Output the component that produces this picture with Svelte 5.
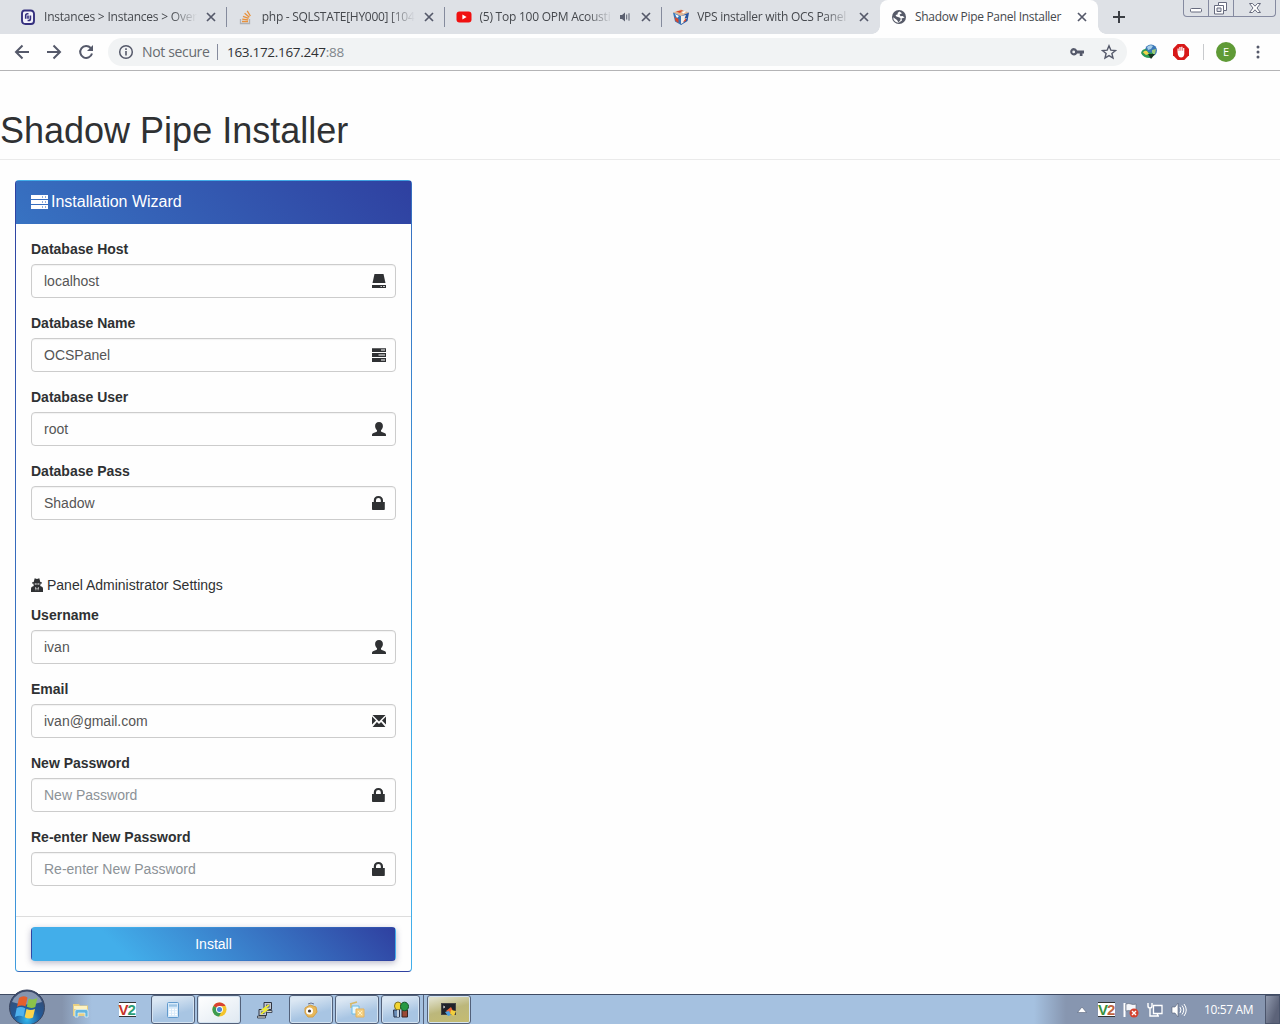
<script lang="ts">
  type Tab = { icon: string; title: string; audio?: boolean; active?: boolean; spacing: number };
  type Field = { label: string; value?: string; placeholder?: string; icon: string };

  const tabs: Tab[] = [
    { icon: "scaleway", title: "Instances > Instances > Over", spacing: -0.22 },
    { icon: "stack", title: "php - SQLSTATE[HY000] [104", spacing: -0.28 },
    { icon: "youtube", title: "(5) Top 100 OPM Acousti", audio: true, spacing: -0.24 },
    { icon: "cube", title: "VPS installer with OCS Panel", spacing: -0.28 },
    { icon: "globe", title: "Shadow Pipe Panel Installer", active: true, spacing: -0.3 },
  ];

  const database: Field[] = [
    { label: "Database Host", value: "localhost", icon: "hdd" },
    { label: "Database Name", value: "OCSPanel", icon: "tasks" },
    { label: "Database User", value: "root", icon: "user" },
    { label: "Database Pass", value: "Shadow", icon: "lock" },
  ];

  const admin: Field[] = [
    { label: "Username", value: "ivan", icon: "user" },
    { label: "Email", value: "ivan@gmail.com", icon: "envelope" },
    { label: "New Password", placeholder: "New Password", icon: "lock" },
    { label: "Re-enter New Password", placeholder: "Re-enter New Password", icon: "lock" },
  ];
</script>

{#snippet favicon(name: string)}
  <svg class="favicon" viewBox="0 0 16 16" width="16" height="16">
    {#if name === "scaleway"}
      <path d="M4.500 1.500h6q3.500 0 3.500 3.500v7q0 3-3 3H5.500Q2 15 2 11.500V4.500q0-3 2.500-3z" fill="#f2f1fa" stroke="#35307f" stroke-width="1.900" />
      <path d="M8.500 4.800H7.500Q5.700 4.800 5.700 6.500v3.200M7.600 11.500h1q1.800 0 1.800-1.800V6.500M8 6.500v3.200" fill="none" stroke="#35307f" stroke-width="1.600" />
    {:else if name === "stack"}
      <path d="M2.500 10v4.500h9V10" fill="none" stroke="#aeb0b4" stroke-width="1.300" />
      <path d="M4 12.500h6M4.200 10.100l6 .8M5 7.300l5.600 2M6.600 4.300l4.800 4M9.200 1.800l3.200 5.200" stroke="#e8913c" stroke-width="1.300" />
    {:else if name === "youtube"}
      <rect x="0.500" y="2.500" width="15" height="11" rx="3" fill="#f01010" />
      <path d="M6.400 5.500v5l4.200-2.500z" fill="#fff" />
    {:else if name === "cube"}
      <path d="M0 3.500L8 .500l8 3L8 7z" fill="#dfb795" />
      <path d="M0 3.500L8 7v9L2 12.500z" fill="#3574b8" />
      <path d="M16 3.500L8 7v9l6.500-4z" fill="#2855a0" />
      <path d="M3 2.500l4 1.400 3-2.900zM1.500 8l4 2v4L2.500 12z" fill="#d8472c" />
      <path d="M8 7l5-1-1.500 3.500L14 9l-4 5-2 1z" fill="#f4eee6" />
      <path d="M2 5l4 2-2 2zM9 3l3-1 1 1-3 1.500z" fill="#fff" />
      <path d="M10 13l3-4v3z" fill="#d8472c" />
    {:else}
      <circle cx="8" cy="8" r="7" fill="#565a68" />
      <path d="M8.500 2.400Q6 3.500 6.500 5.500L4.500 6Q5 8 7 8l2.500 1v2L7.500 13.500 6 11 2.200 8.200Q2 11 4.500 12.800 7 14.200 8 13.600L11 11.500 10.500 9.500 13.700 8.500 11.500 7 9.500 7.200 8.500 5.500 11 4.300z" fill="#fff" />
    {/if}
  </svg>
{/snippet}

{#snippet glyph(name: string)}
  <svg class="glyph" viewBox="0 0 14 14" width="14" height="14" fill="#2f3133">
    {#if name === "hdd"}
      <path d="M2.500 0h9L13.500 9H.500z" />
      <path fill-rule="evenodd" d="M0 11h14v3H0zM8.500 12v.800h1.500V12zM11 12v.800h2V12z" />
    {:else if name === "tasks"}
      <path fill-rule="evenodd" d="M0 .200h14v3.900H0zM9 1.600v1h4v-1zM0 5.100h14v3.900H0zM6.500 6.500v1H13v-1zM0 10h14v3.900H0zM9 11.400v1h4v-1z" />
    {:else if name === "user"}
      <path d="M7 0C4.400 0 3 1.700 3.100 4.200c.1 1.700.9 3.200 1.900 4.100v1.200C4.200 10.200 1.500 10.700.600 11.600 0 12.200 0 13 0 14h14c0-1 0-1.800-.6-2.400-.9-.9-3.600-1.400-4.400-2.100V8.300c1-.9 1.800-2.400 1.900-4.100C11 1.700 9.600 0 7 0z" />
    {:else if name === "lock"}
      <path fill-rule="evenodd" d="M0 6h1.800V4.200C1.800 1.700 3.600 0 6.400 0S11 1.700 11 4.200V6h1.800v7.200q0 .8-.8.800H.800q-.8 0-.8-.8zM4 6h4.800V4.200Q8.800 2 6.400 2T4 4.200z" />
    {:else}
      <path d="M.500 1h13L7 7.400zM0 2.500l4 4L0 10.600zM14 2.500v8.100L10 6.500zM.600 13l4.300-5L7 10l2.100-2L13.400 13z" />
    {/if}
  </svg>
{/snippet}

{#snippet cross()}
  <svg class="cross" viewBox="0 0 16 16" width="16" height="16"><path d="M4 4l8 8M12 4l-8 8" stroke="#55596a" stroke-width="1.700" /></svg>
{/snippet}

{#snippet formGroup(f: Field)}
  <div class="form-group">
    <span class="label">{f.label}</span>
    <div class="control">
      {#if f.value}<span class="value">{f.value}</span>{:else}<span class="placeholder">{f.placeholder}</span>{/if}
      {@render glyph(f.icon)}
    </div>
  </div>
{/snippet}

<div class="screen">
  <header class="tab-strip">
    {#each tabs as t (t.title)}
      <div class="tab" class:active={t.active}>
        {@render favicon(t.icon)}
        <span class="title" class:fade={!t.active} style="letter-spacing:{t.spacing}px">{t.title}</span>
        {#if t.audio}
          <svg class="audio" viewBox="0 0 12 12" width="12" height="12">
            <path d="M1 4h2l3-2.500v9L3 8H1z" fill="#5b6070" />
            <path d="M7.700 3.500v5M10 2.300v7.400" stroke="#5b6070" />
          </svg>
        {/if}
        {@render cross()}
      </div>
    {/each}
    <svg class="new-tab" viewBox="0 0 14 14" width="14" height="14"><path d="M7 1v12M1 7h12" stroke="#3b3e44" stroke-width="2" /></svg>
    <div class="window-buttons">
      <svg viewBox="0 0 24 16" width="24" height="16"><rect x="6.500" y="8.500" width="11" height="3.500" rx="1" fill="#fff" stroke="#676b7e" /></svg>
      <svg viewBox="0 0 24 16" width="24" height="16">
        <path fill-rule="evenodd" d="M9.500 2.500h8v8h-3v3.500h-9V5.500h4zM8 8v3.500h4V8z" fill="#fff" stroke="#676b7e" />
        <path d="M9.500 5.500h5v5" fill="none" stroke="#676b7e" />
      </svg>
      <svg viewBox="0 0 41 16" width="41" height="16"><path d="M15.500 3.500h3l2.500 2.700 2.500-2.700h3L23 8l3.500 4.500h-3L21 9.800l-2.500 2.700h-3L19 8z" fill="#fff" stroke="#676b7e" /></svg>
    </div>
  </header>

  <div class="toolbar">
    <svg viewBox="0 0 16 16" width="16" height="16"><path d="M15 8H2M8.500 1.500L2 8l6.500 6.500" fill="none" stroke="#55596a" stroke-width="2" /></svg>
    <svg viewBox="0 0 16 16" width="16" height="16"><path d="M1 8h13M7.500 1.500L14 8l-6.500 6.500" fill="none" stroke="#55596a" stroke-width="2" /></svg>
    <svg viewBox="0 0 16 16" width="16" height="16">
      <path d="M12.700 4A6 6 0 1 0 14 9.500" fill="none" stroke="#55596a" stroke-width="2" />
      <path d="M15 1v6H9z" fill="#55596a" />
    </svg>
    <div class="omnibox">
      <svg viewBox="0 0 16 16" width="16" height="16">
        <circle cx="8" cy="8" r="6.300" fill="none" stroke="#55596a" stroke-width="1.500" />
        <path d="M8 7v4.500M8 4.300v1.600" stroke="#55596a" stroke-width="1.600" />
      </svg>
      <span class="not-secure">Not secure</span>
      <span class="bar"></span>
      <span class="url">163.172.167.247<i>:88</i></span>
      <svg class="key" viewBox="0 0 16 16" width="16" height="16">
        <path fill-rule="evenodd" d="M4.700 4a3.700 3.700 0 0 1 3.500 2.500H15v3h-1.500V12h-2.700V9.500H8.200A3.700 3.700 0 1 1 4.700 4zM4.700 6.500a1.400 1.400 0 1 0 0 2.800 1.400 1.400 0 1 0 0-2.800z" fill="#55596a" />
      </svg>
      <svg class="star" viewBox="0 0 16 16" width="16" height="16"><path d="M8 1.800l1.800 4.300 4.700.4-3.600 3 1.100 4.600L8 11.600l-4 2.500 1.100-4.600-3.600-3 4.700-.4z" fill="none" stroke="#55596a" stroke-width="1.400" /></svg>
    </div>
    <svg class="idm" viewBox="0 0 18 16" width="18" height="16">
      <circle cx="11" cy="6.500" r="6" fill="#3b78b8" />
      <path d="M7 3q3-3 6-1l-2 3-3 1z" fill="#a8cfe8" />
      <path d="M12 6l4-1-1 5-3 1z" fill="#9ccc78" />
      <path d="M1 9q1-4 5-4l2 3 5 1v2l-3 3Q3 14 1 9z" fill="#2d9a56" />
      <path d="M3 8.500q1-2.500 4-1.500l2 3-3 1z" fill="#f2d34a" />
      <path d="M8 10h7l-4 5z" fill="#17351f" />
    </svg>
    <svg class="blocker" viewBox="0 0 16 16" width="16" height="16">
      <path d="M4.700 0h6.600L16 4.700v6.600L11.300 16H4.700L0 11.300V4.700z" fill="#d81818" />
      <path d="M4.500 8V4.500h1.200V7h.600V3h1.300v3.700h.600V2.700h1.300v4h.6V4h1.200v6Q10.800 13.500 8 13.500 6 13.500 5 11z" fill="#fff" />
    </svg>
    <span class="split"></span>
    <span class="avatar">E</span>
    <svg class="menu" viewBox="0 0 4 14" width="4" height="14" fill="#55596a"><circle cx="2" cy="2" r="1.500" /><circle cx="2" cy="7" r="1.500" /><circle cx="2" cy="12" r="1.500" /></svg>
  </div>

  <main>
    <h1>Shadow Pipe Installer</h1>
    <section class="panel">
      <div class="panel-heading">
        <svg viewBox="0 0 17 14" width="17" height="14">
          <path d="M0 0h17v4H0zM0 5h17v4H0zM0 10h17v4H0z" fill="#fff" />
          <path d="M11 2h1M14 2h1M11 7h1M14 7h1M11 12h1M14 12h1" stroke="#6f94cf" stroke-width="1.300" />
        </svg>
        <span>Installation Wizard</span>
      </div>
      <div class="panel-body">
        {#each database as f (f.label)}{@render formGroup(f)}{/each}
        <div class="legend">
          <svg viewBox="0 0 12 14" width="12" height="14">
            <path d="M2.700 4L3.700.300l2.300.7L8.300.300 9.300 4l1.700.5v1H9.700L9.200 8l1.800.8q1 .7 1 2V14H0v-3.200q0-1.300 1-2L2.800 8l-.5-2.500H1v-1z" fill="#2f3133" />
            <path d="M3.700 5.600h2v1h-2zM6.400 5.600h2v1h-2zM4 9l1.500 1-.500 3zM8 9L6.500 10l.5 3z" fill="#fff" />
          </svg>
          <span>Panel Administrator Settings</span>
        </div>
        {#each admin as f (f.label)}{@render formGroup(f)}{/each}
      </div>
      <div class="panel-footer"><button>Install</button></div>
    </section>
  </main>

  <footer class="taskbar">
    <svg class="orb" viewBox="0 0 38 36" width="38" height="36">
      <defs>
        <radialGradient id="orb" cx="50%" cy="85%" r="80%">
          <stop offset="0" stop-color="#32b7ed" />
          <stop offset="0.450" stop-color="#205b9c" />
          <stop offset="1" stop-color="#3b4a6b" />
        </radialGradient>
      </defs>
      <circle cx="19" cy="18.500" r="17.500" fill="url(#orb)" stroke="#3a455f" />
      <path d="M4 13Q8 3 19 2.500 30 3 34 13 19 18 4 13z" fill="#c6d1e2" opacity="0.550" />
      <path d="M11 9q4-3 8.500-.5l-2 9q-4-2-8.500.2z" fill="#e5602d" />
      <path d="M20.800 9.500q4 2 8.500-.5l-2 9q-4 2-8.500-.2z" fill="#8bc34a" />
      <path d="M8.700 19q4-2 8.500.2l-1.800 8.500q-4-2-8.500.2z" fill="#4fb2ee" />
      <path d="M18.500 20q4 2 8.500 0l-2 8.500q-4 2-8.300-.3z" fill="#fbd34c" />
    </svg>
    <div class="launch explorer">
      <svg viewBox="0 0 18 16" width="18" height="16">
        <path d="M1 2h6l1 1.500h8V14H1z" fill="#e8cf82" />
        <path d="M2 4h13v3H2z" fill="#fff3c0" />
        <path d="M3 15V9q0-1.500 2-1.500h9q2 0 2 1.500v6h-3v-4H6v4z" fill="#65b5de" stroke="#e6f6ff" stroke-width="0.700" />
      </svg>
    </div>
    <div class="launch">
      <span class="v2"><b>V</b><em>2</em></span>
    </div>
    <div class="task">
      <svg viewBox="0 0 16 18" width="16" height="18">
        <rect x="2.500" y="1.500" width="11" height="15" rx="1" fill="#d7eafa" stroke="#629bce" />
        <path d="M4 4h8M4 5h8" stroke="#8bb9df" /><path d="M4 8.500h8M4 11h8M4 13.500h8" stroke="#fff" stroke-width="1.500" stroke-dasharray="2 1" />
      </svg>
    </div>
    <div class="task lit">
      <svg viewBox="0 0 16 16" width="15" height="15">
        <circle cx="8" cy="8" r="7.500" fill="#f4c42c" />
        <path d="M8 8L1.500 4.200A7.500 7.500 0 0 1 14.500 4.300H8z" fill="#d94133" />
        <path d="M8 8L1.500 4.200A7.500 7.500 0 0 0 7.500 15.500L10.500 9.500z" fill="#3c9b50" />
        <circle cx="8" cy="8" r="3.700" fill="#fff" /><circle cx="8" cy="8" r="2.700" fill="#4b86d8" />
      </svg>
    </div>
    <div class="launch putty">
      <svg viewBox="0 0 18 18" width="18" height="18">
        <path d="M8 1.500h7.500v7H8zM3 8.500h7.500v6H3z" fill="#c3c7d0" stroke="#2f3542" />
        <path d="M10 3.500h3.500v3H10zM5 10.500h3.500v2.500H5z" fill="#414d74" />
        <path d="M1.500 15h8v2h-8zM10 9.500h6v2h-6z" fill="#d7d7d2" stroke="#2f3542" stroke-width="0.800" />
        <path d="M13 4L7 8.500h4L5 13" fill="none" stroke="#f1ed31" stroke-width="1.700" />
      </svg>
    </div>
    <div class="task">
      <svg viewBox="0 0 16 16" width="16" height="16">
        <path d="M2 6l5-3 6 2 1 5-4 5H5L2 11z" fill="#e8b859" stroke="#d3a04a" />
        <circle cx="6.500" cy="9" r="3.500" fill="#fff" /><circle cx="6.500" cy="9" r="1.600" fill="#423832" />
        <path d="M5 2q3-2 6 0" stroke="#697391" fill="none" />
      </svg>
    </div>
    <div class="task">
      <svg viewBox="0 0 18 18" width="18" height="18">
        <path d="M2 3l7-2M3 3v4" stroke="#d6b866" stroke-width="1.500" />
        <path d="M4 5h7v8H4z" fill="#e4f7ff" stroke="#69bde8" /><path d="M8 8h8v8H8z" fill="#f4d184" stroke="#e6b35c" />
        <path d="M10 10l4 4M14 10l-4 4" stroke="#fff0c6" />
      </svg>
    </div>
    <div class="task stacked">
      <svg viewBox="0 0 18 18" width="18" height="18">
        <path d="M1.500 9h6v7h-5.500z" fill="#6a8db7" stroke="#273047" /><path d="M10 9h5.500v7h-5.500z" fill="#9b4936" stroke="#3d2420" />
        <ellipse cx="6" cy="5" rx="3.500" ry="4" fill="#f2d532" stroke="#81701c" /><ellipse cx="12.500" cy="5.500" rx="4" ry="4.300" fill="#269943" stroke="#14542a" />
        <path d="M6 9v7" stroke="#e2eaf1" stroke-width="1.500" />
      </svg>
    </div>
    <div class="task alert">
      <svg viewBox="0 0 16 16" width="16" height="16">
        <rect x="0.500" y="1.500" width="14" height="11" fill="#20232a" stroke="#444" />
        <path d="M2 4l2 1-2 1" fill="none" stroke="#fff" stroke-width="0.700" />
        <path d="M5 9l5-4 2 4-4 3z" fill="#ef6638" /><path d="M4 10l4-1 2 4-3 1z" fill="#4f9fe0" /><path d="M10 8l5 1-2 5-4-2z" fill="#f2cf3d" />
      </svg>
    </div>
    <div class="tray">
      <svg viewBox="0 0 10 6" width="10" height="6"><path d="M5 0L9.500 5.500H.500z" fill="#fff" stroke="#59647c" stroke-width="0.600" /></svg>
      <span class="v2 green"><b>V</b><em>2</em></span>
      <svg viewBox="0 0 16 16" width="16" height="16">
        <path d="M1.500 1v14" stroke="#fff" stroke-width="2" /><path d="M3 2q3-1 5 0t5 0v7q-3 1-5 0T3 9z" fill="#f4f6fa" stroke="#596172" stroke-width="0.600" />
        <circle cx="11" cy="11" r="4.500" fill="#d4422f" /><path d="M9 9l4 4M13 9l-4 4" stroke="#fff" stroke-width="1.400" />
      </svg>
      <svg viewBox="0 0 16 16" width="16" height="16">
        <path d="M6.500 3.500h8.500v8h-8.500z" fill="#7584a1" stroke="#fff" stroke-width="1.300" />
        <path d="M1 1v3q0 2 2 2t2-2V1M3 6v8h9M10.500 12v2" fill="none" stroke="#fff" stroke-width="1.400" />
      </svg>
      <svg viewBox="0 0 16 16" width="16" height="16">
        <path d="M1 5h3l3-4v14l-3-4H1z" fill="#fff" stroke="#566077" stroke-width="0.600" /><path d="M9 5q2 3 0 6M11 3.500q3.500 4.500 0 9M13 2q4.500 6 0 12" fill="none" stroke="#fff" />
      </svg>
      <span class="clock">10:57 AM</span>
    </div>
    <div class="show-desktop"></div>
  </footer>
</div>

<style>
  :global(body) {
    margin: 0;
    background: #fff;
  }
  .screen {
    display: flex;
    flex-direction: column;
    width: 1280px;
    height: 1024px;
    overflow: hidden;
    box-sizing: border-box;
    background: #fefefe;
    font-family: "Liberation Sans", Arial, sans-serif;
    font-size: 14px;
    line-height: 20px;
    color: #2f3133;
  }
  svg {
    display: block;
    flex: none;
  }

  .tab-strip {
    position: relative;
    display: flex;
    align-items: center;
    height: 34px;
    flex: none;
    padding-left: 9px;
    background: #dee1e6;
    font-family: "Open Sans", sans-serif;
    font-size: 12px;
  }
  .tab {
    display: flex;
    align-items: center;
    width: 217.750px;
    height: 34px;
    padding: 0 8px 0 11px;
    box-sizing: border-box;
    position: relative;
    color: #45484d;
  }
  .tab:not(.active)::after {
    content: "";
    position: absolute;
    right: 0;
    top: 7px;
    width: 1px;
    height: 20px;
    background: #858b9d;
  }
  .tab:nth-child(4)::after {
    display: none;
  }
  .tab.active {
    background: #fefefe;
    border-radius: 8px 8px 0 0;
  }
  .tab.active::before,
  .tab.active::after {
    content: "";
    position: absolute;
    bottom: 0;
    width: 8px;
    height: 8px;
  }
  .tab.active::before {
    left: -8px;
    background: radial-gradient(circle at 0 0, transparent 7.500px, #fefefe 8px);
  }
  .tab.active::after {
    right: -8px;
    background: radial-gradient(circle at 100% 0, transparent 7.500px, #fefefe 8px);
  }
  .title {
    flex: 1;
    min-width: 0;
    margin: 0 4px 0 8px;
    white-space: nowrap;
  }
  .fade {
    mask-image: linear-gradient(to right, #000 calc(100% - 28px), transparent calc(100% - 2px));
  }
  .audio {
    margin-right: 7px;
  }
  .new-tab {
    margin-left: 14px;
  }
  .window-buttons {
    position: absolute;
    right: 4px;
    top: 0;
    display: flex;
    border: 1px solid #858aa0;
    border-top: 0;
    border-radius: 0 0 4px 4px;
  }
  .window-buttons svg + svg {
    border-left: 1px solid #858aa0;
  }

  .toolbar {
    display: flex;
    align-items: center;
    height: 37px;
    flex: none;
    box-sizing: border-box;
    padding-left: 14px;
    gap: 16px;
    background: #fefefe;
    border-bottom: 1px solid #b4b4b6;
    font-family: "Open Sans", sans-serif;
  }
  .omnibox {
    display: flex;
    align-items: center;
    width: 1019px;
    height: 28px;
    margin-left: -2px;
    padding: 0 10px;
    box-sizing: border-box;
    border-radius: 14px;
    background: #f1f3f4;
    color: #676b70;
  }
  .not-secure {
    width: 67px;
    margin-left: 8px;
    white-space: nowrap;
    letter-spacing: -0.350px;
  }
  .bar {
    width: 1px;
    height: 16px;
    margin: 0 9px 0 8px;
    background: #858b9d;
  }
  .url {
    color: #2f3133;
    font-size: 13.500px;
    letter-spacing: -0.300px;
  }
  .url i {
    font-style: normal;
    color: #80868b;
  }
  .key {
    margin-left: auto;
    margin-right: 16px;
  }
  .idm {
    margin-left: -3px;
  }
  .blocker {
    margin-left: -1px;
  }
  .split {
    width: 1px;
    height: 16px;
    margin-left: -2px;
    background: #c8cacd;
  }
  .avatar {
    width: 20px;
    height: 20px;
    margin-left: -4px;
    border-radius: 50%;
    background: #5f9a36;
    color: #fff;
    font-size: 11px;
    text-align: center;
  }
  .menu {
    margin-left: 4px;
  }

  main {
    flex: 1;
    min-height: 0;
  }
  h1 {
    height: 39px;
    margin: 40px 0 20px;
    padding-bottom: 9px;
    border-bottom: 1px solid #eaeaea;
    font-size: 36px;
    font-weight: 400;
    line-height: 39px;
  }
  /* the gradient repeats under the transparent border, so each edge shows the opposite side's colour */
  .panel {
    width: 397px;
    margin-left: 15px;
    box-sizing: border-box;
    border: 1px solid transparent;
    border-radius: 4px;
    background: linear-gradient(45deg, #42aeea 20%, #2f40a0 100%);
  }
  .panel-heading {
    display: flex;
    align-items: center;
    gap: 3px;
    height: 43px;
    padding: 0 15px 2px;
    box-sizing: border-box;
    color: #fff;
    font-size: 16px;
  }
  .panel-body {
    padding: 15px;
    background: #fefefe;
  }
  .form-group {
    margin-bottom: 15px;
  }
  .label {
    display: block;
    margin-bottom: 5px;
    font-weight: 700;
  }
  .control {
    display: flex;
    align-items: center;
    justify-content: space-between;
    height: 34px;
    box-sizing: border-box;
    padding: 0 9px 0 12px;
    border: 1px solid #ccc;
    border-radius: 4px;
    box-shadow: inset 0 1px 1px rgba(0, 0, 0, 0.050);
  }
  .value {
    color: #555;
  }
  .placeholder {
    color: #8c9297;
  }
  .legend {
    display: flex;
    align-items: center;
    gap: 4px;
    margin: 55px 0 10px;
  }
  .panel-footer {
    padding: 10px 15px;
    background: #fefefe;
    border-top: 1px solid #ddd;
    border-radius: 0 0 3px 3px;
  }
  button {
    display: block;
    width: 100%;
    height: 34px;
    padding: 0;
    border: 1px solid transparent;
    border-radius: 4px;
    background: linear-gradient(45deg, #42aeea 25%, #2f40a0 100%);
    box-shadow: 0 2px 6px rgba(60, 60, 110, 0.350);
    color: #fff;
    font: inherit;
  }

  .taskbar {
    position: relative;
    display: flex;
    height: 30px;
    flex: none;
    box-sizing: border-box;
    padding-left: 58px;
    border-top: 1px solid #3f4b63;
    background: linear-gradient(to right, #8594ad 62px, #a5c1e0 92px, #a5c1e0 1034px, #8796b0 1066px);
  }
  .orb {
    position: absolute;
    left: 8px;
    top: -6px;
  }
  .launch,
  .task {
    display: flex;
    align-items: center;
    justify-content: center;
    width: 46px;
    box-sizing: border-box;
  }
  .task {
    width: 44px;
    margin: 0 1px;
    border: 1px solid #53617a;
    border-radius: 3px;
    background: linear-gradient(165deg, #dbe7f3 15%, #a8c5e3 65%);
    box-shadow: inset 0 0 0 1px #d5e4f2;
  }
  .lit {
    background: linear-gradient(150deg, #fff, #dfe8f1);
  }
  .stacked {
    width: 39px;
    margin-right: 6px;
    position: relative;
  }
  .stacked::after {
    content: "";
    position: absolute;
    right: -5px;
    top: -1px;
    width: 3px;
    height: 29px;
    border-right: 1px solid #53617a;
  }
  .alert {
    background: linear-gradient(165deg, #dfdfc9 10%, #bcb77b 50%, #c5bc70);
  }
  .v2 {
    display: flex;
    width: 17px;
    height: 15px;
    box-sizing: border-box;
    background: #fff;
    border-top: 1px solid #333;
    border-bottom: 1px solid #333;
    font-size: 15px;
    line-height: 14px;
  }
  .v2 b {
    width: 9px;
    color: #c73228;
  }
  .v2 em {
    color: #2c9d75;
    font-style: normal;
    font-weight: 700;
  }
  .v2.green b {
    color: #36903d;
  }
  .v2.green em {
    color: #bf6540;
  }
  .tray {
    display: flex;
    align-items: center;
    gap: 8px;
    margin-left: auto;
    margin-right: 11px;
  }
  .tray > svg:first-child {
    margin-right: 3px;
  }
  .clock {
    width: 50px;
    margin-left: 9px;
    color: #fff;
    font: 12px/20px "Open Sans", sans-serif;
    letter-spacing: -0.350px;
    white-space: nowrap;
  }
  .show-desktop {
    width: 15px;
    box-sizing: border-box;
    border: 1px solid #4b556c;
    background: linear-gradient(110deg, #9099ad, #5c6379 70%);
  }
</style>
